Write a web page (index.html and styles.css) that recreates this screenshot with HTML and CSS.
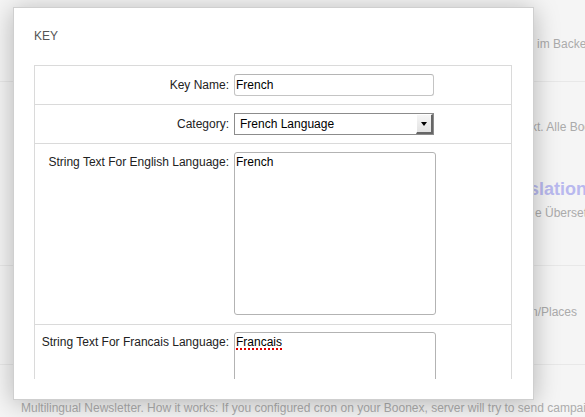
FILE: index.html
```html
<!DOCTYPE html>
<html lang="en">
<head>
<meta charset="utf-8">
<title>Key</title>
<link rel="stylesheet" href="styles.css">
</head>
<body>
<div class="page">
  <section class="bg-sec s1">
    <p class="bg-line l-back">im Backend verwalten und anpassen</p>
  </section>
  <section class="bg-sec s2">
    <p class="bg-line l-alle">kt. Alle Boonex Module werden unterstützt</p>
    <h3 class="bg-title">slations</h3>
    <p class="bg-line l-uber">e Übersetzungen für alle Sprachen</p>
  </section>
  <section class="bg-sec s3">
    <p class="bg-line l-places">n/Places</p>
  </section>
  <section class="bg-sec s4">
    <p class="bg-foot">Multilingual Newsletter. How it works: If you configured cron on your Boonex, server will try to send campaigns</p>
  </section>
</div>

<div class="dialog">
  <h2 class="title">KEY</h2>
  <div class="form">
    <div class="row">
      <label class="label" for="kn">Key Name:</label>
      <div class="field"><input id="kn" class="input" type="text" value="French"></div>
    </div>
    <div class="row">
      <label class="label" for="cat">Category:</label>
      <div class="field">
        <div class="select-wrap">
          <select id="cat" class="select"><option>French Language</option></select>
          <span class="arrow"></span>
        </div>
      </div>
    </div>
    <div class="row tall">
      <label class="label">String Text For English Language:</label>
      <div class="field"><div class="textarea big">French</div></div>
    </div>
    <div class="row tall">
      <label class="label">String Text For Francais Language:</label>
      <div class="field"><div class="textarea big"><span class="spell">Francais</span></div></div>
    </div>
  </div>
</div>
</body>
</html>
```

FILE: styles.css
```css
html, body {
  margin: 0;
  padding: 0;
}
body {
  width: 585px;
  height: 417px;
  overflow: hidden;
  position: relative;
  background: #f5f5f5;
  font-family: "Liberation Sans", Arial, sans-serif;
  font-size: 12px;
}

/* background page */
.page {
  width: 585px;
  overflow: hidden;
}
.bg-sec {
  box-sizing: border-box;
  border-bottom: 1px solid #e8e8e8;
}
.s1 { height: 82px; padding-top: 37px; }
.s2 { height: 184px; padding-top: 38px; }
.s3 { height: 99px; padding-top: 39px; }
.s4 { border-bottom: none; padding-top: 36px; }

.bg-line {
  margin: 0;
  line-height: 15px;
  white-space: nowrap;
  overflow: hidden;
  color: #ababab;
}
.l-back { padding-left: 537px; }
.l-alle { padding-left: 531px; }
.l-uber { padding-left: 535px; margin-top: 6px; }
.l-places { padding-left: 531px; }
.bg-title {
  margin: 44px 0 0;
  padding-left: 529px;
  font-size: 18px;
  line-height: 21px;
  font-weight: bold;
  white-space: nowrap;
  overflow: hidden;
  color: #b9b9ef;
}
.bg-foot {
  margin: 0;
  padding-left: 21px;
  line-height: 15px;
  white-space: nowrap;
  overflow: hidden;
  color: #adadad;
}

/* dialog */
.dialog {
  position: absolute;
  left: 13px;
  top: 7px;
  width: 521px;
  height: 393px;
  box-sizing: border-box;
  background: #fff;
  border: 1px solid #cfcfcf;
  box-shadow: 0 3px 24px rgba(0, 0, 0, 0.27);
  padding: 21px 0 0 20px;
}
.title {
  margin: 0;
  font-size: 12px;
  line-height: 15px;
  font-weight: normal;
  color: #555;
}
.form {
  margin-top: 21px;
  width: 478px;
  height: 314px;
  box-sizing: border-box;
  overflow: hidden;
  border: 1px solid #dadada;
  border-bottom: none;
}
.row {
  display: grid;
  grid-template-columns: 199px 1fr;
  border-bottom: 1px solid #dadada;
  padding: 8px 0;
}
.row.tall {
  padding: 8px 0 9px;
}
.row.tall + .row.tall {
  padding-top: 7px;
}
.label {
  align-self: center;
  text-align: right;
  padding-right: 5px;
  color: #222;
  line-height: 15px;
}
.row.tall .label {
  align-self: start;
  padding-top: 3px;
}
.input {
  display: block;
  width: 200px;
  height: 22px;
  box-sizing: border-box;
  margin: 0;
  border: 1px solid #c4c4c4;
  border-top-color: #b5b5b5;
  border-radius: 3px;
  padding: 0 1px;
  font-family: "Liberation Sans", Arial, sans-serif;
  font-size: 12px;
  color: #000;
  background: #fff;
  outline: none;
}
.select-wrap {
  position: relative;
  width: 200px;
  height: 22px;
}
.select {
  display: block;
  -webkit-appearance: none;
  appearance: none;
  width: 200px;
  height: 22px;
  box-sizing: border-box;
  margin: 0;
  border: 1px solid #8c8c8c;
  border-radius: 0;
  padding: 0 0 0 5px;
  background: #fff;
  font-family: "Liberation Sans", Arial, sans-serif;
  font-size: 12px;
  color: #000;
  outline: none;
}
.arrow {
  position: absolute;
  right: 1px;
  top: 1px;
  width: 17px;
  height: 20px;
  box-sizing: border-box;
  background: linear-gradient(#f6f6f6, #e2e2e2);
  border-left: 1px solid #fff;
  border-top: 1px solid #fff;
  border-right: 2px solid #666;
  border-bottom: 2px solid #666;
}
.arrow::after {
  content: "";
  position: absolute;
  left: 4px;
  top: 7px;
  border-left: 3.5px solid transparent;
  border-right: 3.5px solid transparent;
  border-top: 4px solid #000;
}
.textarea {
  width: 202px;
  box-sizing: border-box;
  border: 1px solid #b3b3b3;
  border-radius: 3px;
  padding: 2px 1px;
  line-height: 15px;
  color: #000;
  background: #fff;
}
.textarea.big {
  height: 163px;
}
.spell {
  text-decoration: underline dotted #e00000;
  text-decoration-thickness: 2px;
  text-underline-offset: 2px;
}
```
